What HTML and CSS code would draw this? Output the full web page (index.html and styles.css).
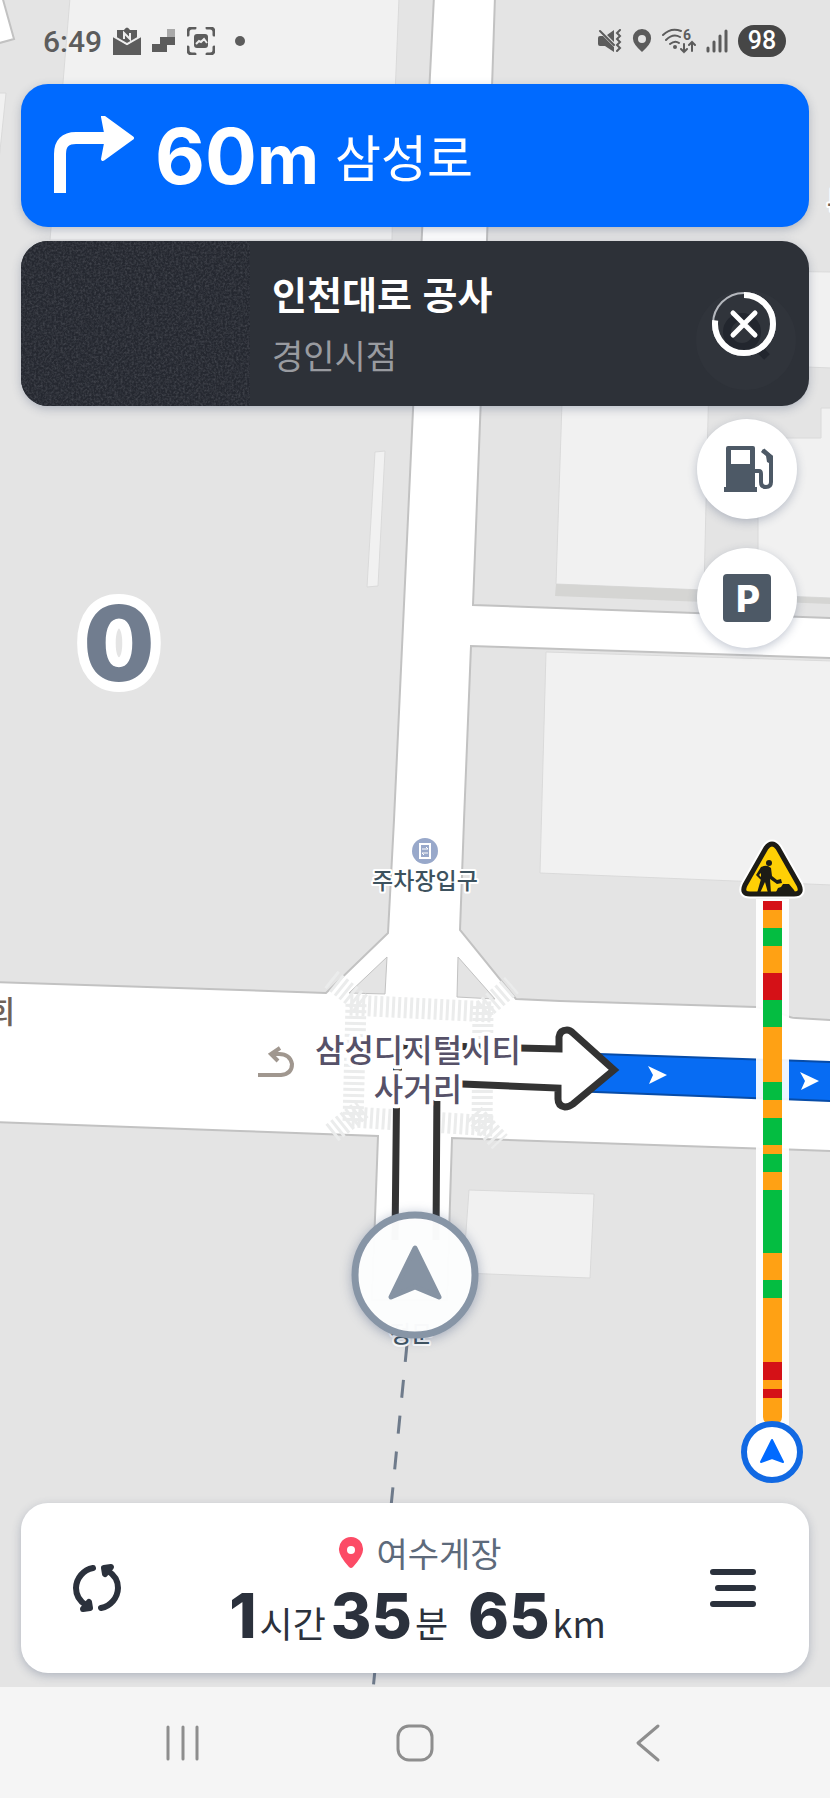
FILE: index.html
```html
<!DOCTYPE html>
<html lang="ko">

<head>
  <meta charset="utf-8">
  <title>길안내</title>
  <meta name="viewport" content="width=device-width, initial-scale=1.0">
  <link rel="stylesheet" href="styles.css">
</head>

<body>
  <div class="app">
    <div class="stage">
      <!-- map -->
      <svg class="map" viewBox="0 0 830 1687" preserveAspectRatio="xMidYMid slice" aria-hidden="true">
        <rect width="830" height="1687" class="land"/>

        <g class="building">
          <path d="M70 -2L399 -2L394 120L392 240L50 240Z"/>
          <path d="M-2 93H6L-2 170Z"/>
          <path d="M375 452L385 451L378 586L367 587Z"/>
          <path d="M679 270L832 272V368L676 362Z"/>
          <path d="M563 372L709 376L704 590L556 584Z"/>
          <path d="M758 438H821V408H832V598L758 595Z"/>
          <path d="M546 652L832 661V885L540 873Z"/>
          <path d="M469 1190L594 1194L590 1278L463 1273Z"/>
        </g>
        <path class="wall" d="M556 584L704 590V602L555 596Z"/>
        <path class="wall" d="M758 595L832 598V604L758 601Z"/>

        <g class="road">
          <path d="M-4 -4H2L14 39L-4 44Z"/>
          <path d="M434 -4H495L487 240L473 605L832 618V658L471 646L464 820L460 930L516 999L560 1001L756 1007L786 1015Q790 1018 796 1018L832 1020V1151L452 1138L447 1300H372L378 1136L240 1131L-4 1122V982L240 990L326 993L388 933L394 820L413 410Z"/>
        </g>
        <path class="island" d="M387 957L385 994L349 993Z"/>
        <path class="island" d="M458 957L457 997L495 999Z"/>

        <g class="crosswalk">
          <path d="M350 1005L492 1012"/>
          <path d="M356 1004L353 1122"/>
          <path d="M483 1006L482 1132"/>
          <path d="M352 1117L494 1126"/>
          <path d="M331 979L362 1004"/>
          <path d="M483 1010L512 985"/>
          <path d="M332 1133L362 1109"/>
          <path d="M474 1114L500 1142"/>
        </g>

        <path class="u-turn" d="M258 1075H281Q292 1074 292 1064Q290 1054 279 1054H272M280 1048L271 1054L278 1061"/>

        <!-- planned route -->
        <path class="route" d="M570 1053L832 1062V1101L570 1091Z"/>
        <path class="route-edge" d="M570 1053L832 1062M570 1091L832 1101"/>
        <path class="route-tip" d="M648 1066L667 1075L649 1084L653 1075Z"/>
        <path class="route-tip" d="M800 1072L819 1081L801 1090L805 1081Z"/>

        <path class="turn-line" d="M395 1240L397 1056Q397 1045 408 1045L559 1049V1037Q560 1030 567 1030Q570 1030 573 1033L614 1070L573 1104Q569 1107 565 1107Q558 1106 558 1099V1088L437 1083L436 1240"/>
        <path class="turn-tick" d="M393 1069H402"/>

        <path class="trail" d="M407 1344L373 1690"/>

        <!-- places -->
        <circle cx="425" cy="851" r="13" class="poi"/>
        <path class="poi-mark" d="M420 844H430V858H420Z"/>
        <path class="poi-arrows" d="M422 849H428L426 847M428 853H422L424 855"/>
        <g class="label">
          <text x="425" y="889" class="label-place">주차장입구</text>
          <text x="411" y="1342" class="label-place">정문</text>
          <text x="418" y="1062" class="label-cross">삼성디지털시티</text>
          <text x="418" y="1101" class="label-cross">사거리</text>
          <text x="1" y="1023" class="label-edge">회</text>
          <text x="841" y="214" class="label-edge">특</text>
        </g>

        <!-- current position -->
        <circle cx="415" cy="1275" r="60" class="me"/>
        <path class="me-arrow" d="M415 1248L439 1297L415 1287L391 1297Z"/>
      </svg>

      <header class="status">
        <span class="clock">6:49</span>
        <svg width="28" height="28" viewBox="0 0 28 28" class="ink">
          <path d="M4 3H11Q14 -2 17 3H24V11L14 17L4 11Z"/>
          <path d="M0 9L14 18L28 9V28H0Z"/>
          <path class="knock" d="M0 9L14 17L28 9"/>
          <path class="knock" d="M11 12V6L17 12V6"/>
        </svg>
        <svg width="24" height="24" viewBox="0 0 24 24" class="ink">
          <path d="M0 15H8V8H15V1H23V16H15V23H0Z"/>
          <path d="M15 0H23V8H15Z" class="pale"/>
        </svg>
        <svg width="28" height="28" viewBox="0 0 28 28" class="ink">
          <path class="line" d="M1 8V5Q1 1 5 1H8M20 1H23Q27 1 27 5V8M27 20V23Q27 27 23 27H20M8 27H5Q1 27 1 23V20"/>
          <rect x="7" y="7" width="14" height="14" rx="3"/>
          <path class="knock" d="M9 17L12 14L14 15L17 12L20 16"/>
        </svg>
        <svg width="24" height="24" viewBox="0 0 24 24" class="ink"><circle cx="14" cy="12" r="5"/></svg>

        <div class="status-right">
          <svg width="24" height="24" viewBox="0 0 24 24" class="ink">
            <path d="M0 9Q0 7 2 7H5L16 18V23L7 17H2Q0 17 0 15ZM9 6L16 1V13Z"/>
            <path class="line thin" d="M2 2L16 16M22 1L19 4L22 7L19 10L22 13L19 16L22 19L19 22"/>
          </svg>
          <svg width="20" height="24" viewBox="0 0 20 24" class="ink">
            <path fill-rule="evenodd" d="M10 0A9 9 0 0 1 19 10Q19 15 10 23Q1 15 1 10A9 9 0 0 1 10 0ZM10 6A4 4 0 1 0 10 14A4 4 0 1 0 10 6Z"/>
          </svg>
          <svg width="34" height="26" viewBox="0 0 34 26" class="ink">
            <path class="line thin" d="M1 7Q9 -1 19 3M4 12Q11 5 18 9M8 16Q13 12 17 15M22 16V24M19 21L22 24L25 21M30 23V14M27 17L30 14L33 17"/>
            <circle cx="13" cy="19" r="2"/>
            <text x="21" y="12" class="wifi-num">6</text>
          </svg>
          <svg width="22" height="24" viewBox="0 0 22 24" class="ink">
            <path class="line" d="M2 19V22M8 13V22M14 7V22M20 2V22"/>
          </svg>
          <span class="battery">98</span>
        </div>
      </header>

      <section class="card turn">
        <svg width="82" height="80" viewBox="0 2 82 80" aria-hidden="true">
          <path class="turn-stem" d="M7 79V40Q7 24 23 24H56"/>
          <path class="turn-head" d="M50 3L79 24L50 45L54 24Z"/>
        </svg>
        <strong class="distance">60<span class="metre">m</span></strong>
        <span class="street">삼성로</span>
      </section>

      <section class="card notice">
        <svg class="thumb" aria-hidden="true">
          <filter id="grain">
            <feTurbulence type="fractalNoise" baseFrequency="0.45" numOctaves="3" seed="4"/>
            <feColorMatrix values="0 0 0 0 .22  0 0 0 0 .23  0 0 0 0 .26  2 0 0 0 -.7"/>
          </filter>
          <rect width="100%" height="100%" filter="url(#grain)" opacity=".3"/>
        </svg>
        <div class="notice-text">
          <h2>인천대로 공사</h2>
          <p>경인시점</p>
        </div>
        <button class="dismiss" type="button" aria-label="닫기">
          <svg width="66" height="66" viewBox="0 0 66 66">
            <circle cx="35" cy="49" r="50" class="under"/>
            <circle cx="31" cy="41" r="15" class="under-lens"/>
            <path class="under-lens" d="M46 56L56 66"/>
            <circle cx="33" cy="33" r="31" class="ring"/>
            <circle cx="33" cy="33" r="29" class="ring-left" pathLength="100" transform="rotate(-90 33 33)"/>
            <path class="cross" d="M22 22L44 44M44 22L22 44"/>
          </svg>
        </button>
      </section>

      <main class="over-map">
        <svg class="speed" width="100" height="110" viewBox="0 0 100 110"><text x="50" y="93">0</text></svg>

        <div class="side">
          <button class="round" type="button" aria-label="주유소">
            <svg width="50" height="48" viewBox="-2 0 50 48">
              <path fill-rule="evenodd" d="M4 1H29Q31 1 31 3V42H33V47H0V42H2V3Q2 1 4 1ZM7 5V19H26V5Z"/>
              <path class="hose" d="M30 26H35Q37 26 37 29V37Q37 42 42 42Q47 42 47 37V12L39 5"/>
              <path d="M39 4L49 11V20L43 17L42 11L37 7Z"/>
            </svg>
          </button>
          <button class="round" type="button" aria-label="주차장">
            <svg width="48" height="48" viewBox="0 0 48 48">
              <rect width="48" height="48" rx="4"/>
              <text x="25" y="38" class="parking">P</text>
            </svg>
          </button>

          <!-- traffic on the way ahead -->
          <div class="traffic">
            <svg class="sign" width="66" height="60" viewBox="0 0 66 60">
              <path class="sign-halo" d="M27 9Q33 1 39 9L60 46Q64 55 55 55H11Q2 55 6 46Z"/>
              <path class="sign-face" d="M27 9Q33 1 39 9L60 46Q64 55 55 55H11Q2 55 6 46Z"/>
              <circle cx="30" cy="24" r="3"/>
              <path d="M22 28Q28 25 32 29L33 37L38 41L42 40L43 44L38 45L31 40L32 54H29L26 43L21 54H18L22 40L22 34L20 36L23 39L22 41L17 36Z"/>
              <path d="M36 55L39 49L42 48L44 45L50 45L55 51L57 55Z"/>
            </svg>
            <div class="bar">
              <i class="jam" style="flex-grow:1"></i>
              <i class="slow" style="flex-grow:2"></i>
              <i class="free" style="flex-grow:2"></i>
              <i class="slow" style="flex-grow:3"></i>
              <i class="jam" style="flex-grow:3"></i>
              <i class="free" style="flex-grow:3"></i>
              <i class="slow" style="flex-grow:6"></i>
              <i class="free" style="flex-grow:2"></i>
              <i class="slow" style="flex-grow:2"></i>
              <i class="free" style="flex-grow:3"></i>
              <i class="slow" style="flex-grow:1"></i>
              <i class="free" style="flex-grow:2"></i>
              <i class="slow" style="flex-grow:2"></i>
              <i class="free" style="flex-grow:7"></i>
              <i class="slow" style="flex-grow:3"></i>
              <i class="free" style="flex-grow:2"></i>
              <i class="slow" style="flex-grow:7"></i>
              <i class="jam" style="flex-grow:2"></i>
              <i class="slow" style="flex-grow:1"></i>
              <i class="jam" style="flex-grow:1"></i>
              <i class="slow" style="flex-grow:3"></i>
            </div>
            <svg class="car" width="62" height="62" viewBox="0 0 62 62">
              <circle cx="31" cy="31" r="28"/>
              <path d="M31 19L42 41L31 37L20 41Z"/>
            </svg>
          </div>
        </div>
      </main>

      <section class="card trip">
        <button type="button" aria-label="경로 새로고침">
          <svg width="52" height="52" viewBox="0 0 52 52">
            <g id="half">
              <path d="M22 6A21 21 0 0 0 5 26Q5 37 15 43"/>
              <path class="head" d="M18 40L19 46L12 47Z"/>
            </g>
            <use href="#half" transform="rotate(180 26 26)"/>
          </svg>
        </button>
        <div class="trip-info">
          <p class="goal">
            <svg width="26" height="32" viewBox="0 0 26 32" aria-hidden="true">
              <path d="M13 0A12 12 0 0 1 25 13Q25 19 15 30Q13 32 11 30Q1 19 1 13A12 12 0 0 1 13 0Z"/>
              <circle cx="13" cy="13" r="4"/>
            </svg>
            여수게장
          </p>
          <p class="eta">
            <b>1</b><span>시간</span><b>35</b><span>분</span><b class="km">65</b><span>km</span>
          </p>
        </div>
        <button type="button" aria-label="메뉴">
          <svg width="52" height="52" viewBox="0 0 52 52">
            <path d="M6 10H46M11 26H46M6 42H46"/>
          </svg>
        </button>
      </section>
    </div>

    <nav class="keys">
      <button type="button" aria-label="최근 앱">
        <svg width="40" height="40" viewBox="0 0 40 40"><path d="M7 4V36M22 4V36M36 4V36"/></svg>
      </button>
      <button type="button" aria-label="홈">
        <svg width="40" height="40" viewBox="0 0 40 40"><rect x="3" y="3" width="34" height="34" rx="11"/></svg>
      </button>
      <button type="button" aria-label="뒤로">
        <svg width="40" height="40" viewBox="0 0 40 40"><path d="M29 3L9 20L29 37"/></svg>
      </button>
    </nav>
  </div>
</body>

</html>
```
FILE: styles.css
```css
:root {
  --blue: #006aff;
  --ink: #2b313c;
  --icon: #4d5966;
  --status: #5c5c5c;
  --jam: #d51117;
  --slow: #ffa114;
  --free: #04bd41;
  --shadow: 0 3px 10px rgba(60, 75, 110, 0.3);
}

* {
  box-sizing: border-box;
}

body {
  margin: 0;
  font-family: "Noto Sans CJK KR", sans-serif;
  color: var(--ink);
}

h2,
p {
  margin: 0;
}

button {
  border: 0;
  padding: 0;
  background: none;
  cursor: pointer;
}

svg {
  display: block;
}

.app {
  min-height: 100vh;
  display: flex;
  flex-direction: column;
}

.stage {
  flex: 1;
  position: relative;
  display: flex;
  flex-direction: column;
  padding: 0 21px 14px;
  overflow: hidden;
}

.stage > * {
  position: relative;
}

/* map */

.stage > .map {
  position: absolute;
  inset: 0;
  width: 100%;
  height: 100%;
}

.land {
  fill: #e4e4e4;
}

.building {
  fill: #f1f1f1;
  stroke: #dadada;
  stroke-width: 1;
}

.wall {
  fill: #d5d5d3;
}

.road {
  fill: #fff;
  stroke: #c2c2c2;
  stroke-width: 2;
}

.island {
  fill: #e4e4e4;
  stroke: #c2c2c2;
  stroke-width: 1;
}

.crosswalk {
  fill: none;
  stroke: #ebecec;
  stroke-width: 21;
  stroke-dasharray: 3 3;
}

.u-turn {
  fill: none;
  stroke: #a0978f;
  stroke-width: 4;
}

.route {
  fill: #076cf3;
}

.route-edge {
  fill: none;
  stroke: #074ca8;
  stroke-width: 2;
}

.route-tip {
  fill: #fff;
}

.turn-line {
  fill: #fff;
  stroke: #333;
  stroke-width: 7;
}

.turn-tick {
  stroke: #333;
  stroke-width: 3;
}

.trail {
  stroke: #6f7b8b;
  stroke-width: 3;
  stroke-dasharray: 18 18;
}

.poi {
  fill: #98a8ca;
}

.poi-mark {
  fill: none;
  stroke: #fff;
  stroke-width: 2;
}

.poi-arrows {
  fill: none;
  stroke: #fff;
  stroke-width: 1;
}

.label {
  text-anchor: middle;
  font-weight: 500;
  paint-order: stroke;
  stroke: #fff;
  stroke-width: 4;
  stroke-linejoin: round;
}

.label-place {
  font-size: 23px;
  fill: #3d525e;
}

.label-cross {
  font-size: 32px;
  fill: #565168;
  stroke-width: 8;
}

.label-edge {
  font-size: 31px;
  fill: #6f6258;
}

.me {
  fill: rgba(255, 255, 255, 0.97);
  stroke: #8795a6;
  stroke-width: 7;
  filter: drop-shadow(0 2px 6px rgba(60, 80, 120, 0.4));
}

.me-arrow {
  fill: #8693a3;
  stroke: #8693a3;
  stroke-width: 5;
  stroke-linejoin: round;
}

/* status bar */

.status {
  height: 84px;
  padding: 0 23px 2px 22px;
  display: flex;
  align-items: center;
  gap: 11px;
}

.clock {
  font: 500 30px Roboto, sans-serif;
  color: var(--status);
}

.status-right {
  margin-left: auto;
  display: flex;
  align-items: center;
  gap: 10px;
}

.ink {
  fill: var(--status);
}

.line {
  fill: none;
  stroke: var(--status);
  stroke-width: 3;
  stroke-linecap: round;
}

.thin {
  stroke-width: 2;
}

.knock {
  fill: none;
  stroke: #eee;
  stroke-width: 2;
}

.pale {
  fill: #a9a9a9;
}

.wifi-num {
  font: 700 14px Roboto, sans-serif;
}

.battery {
  width: 48px;
  border-radius: 16px;
  background: #464646;
  color: #fff;
  font: 500 25px/32px Roboto, sans-serif;
  text-align: center;
}

/* cards */

.card {
  border-radius: 27px;
  box-shadow: var(--shadow);
  display: flex;
  align-items: center;
}

.turn {
  height: 143px;
  margin-bottom: 14px;
  padding: 0 32px;
  background: var(--blue);
  color: #fff;
}

.turn-stem {
  fill: none;
  stroke: #fff;
  stroke-width: 12;
}

.turn-head {
  fill: #fff;
  stroke: #fff;
  stroke-width: 4;
  stroke-linejoin: round;
}

.distance {
  margin: 0 16px 0 20px;
  font: 700 77px Inter, sans-serif;
}

.metre {
  font-size: 68px;
}

.street {
  font-size: 50px;
  line-height: 60px;
  padding-bottom: 2px;
}

.notice {
  height: 165px;
  padding-right: 32px;
  background: #2d3138;
  color: #fff;
  overflow: hidden;
}

.thumb {
  width: 229px;
  height: 100%;
  background: #252830;
}

.notice-text {
  flex: 1;
  padding-left: 22px;
}

.notice h2 {
  font-size: 38px;
  line-height: 62px;
  font-weight: 700;
}

.notice p {
  font-size: 34px;
  line-height: 62px;
  color: #999ba0;
}

.dismiss svg {
  overflow: visible;
}

.under {
  fill: #30343b;
}

.under-lens {
  fill: none;
  stroke: #22262e;
  stroke-width: 8;
}

.ring {
  fill: none;
  stroke: #b4b7bd;
  stroke-width: 2;
}

.ring-left {
  fill: none;
  stroke: #fff;
  stroke-width: 6;
  stroke-dasharray: 77 23;
}

.cross {
  stroke: #fff;
  stroke-width: 5;
  stroke-linecap: round;
}

/* controls lying over the map */

.over-map {
  flex: 1;
  display: flex;
  justify-content: space-between;
}

.speed {
  margin: 182px 0 0 48px;
  overflow: visible;
}

.speed text {
  font: 800 104px Inter, sans-serif;
  text-anchor: middle;
  fill: #717d8f;
  stroke: #fff;
  stroke-width: 20;
  stroke-linejoin: round;
  paint-order: stroke;
}

.side {
  display: flex;
  flex-direction: column;
  align-items: flex-end;
  gap: 29px;
  padding: 13px 0 20px;
}

.round {
  width: 100px;
  height: 100px;
  margin-right: 12px;
  border-radius: 50%;
  background: #fff;
  box-shadow: var(--shadow);
  display: grid;
  place-items: center;
  fill: var(--icon);
}

.round svg {
  overflow: visible;
}

.hose {
  fill: none;
  stroke: var(--icon);
  stroke-width: 4;
}

.parking {
  font: 800 37px Inter, sans-serif;
  text-anchor: middle;
  fill: #fff;
}

.traffic {
  flex: 1;
  margin: 162px 4px 0 0;
  display: flex;
  flex-direction: column;
  align-items: center;
}

.sign,
.car {
  position: relative;
  z-index: 1;
}

.sign {
  fill: #1d1c16;
}

.sign-halo {
  fill: #fff;
  stroke: #fff;
  stroke-width: 9;
  stroke-linejoin: round;
}

.sign-face {
  fill: #ffd005;
  stroke: #1d1c16;
  stroke-width: 5;
  stroke-linejoin: round;
}

.bar {
  flex: 1;
  width: 33px;
  margin-bottom: -4px;
  padding: 2px 7px 0;
  background: rgba(255, 255, 255, 0.93);
  display: flex;
  flex-direction: column;
}

.bar i:last-child {
  border-radius: 0 0 8px 8px;
}

.jam {
  background: var(--jam);
}

.slow {
  background: var(--slow);
}

.free {
  background: var(--free);
}

.car {
  fill: #fff;
  stroke: #1169e3;
  stroke-width: 6;
}

.car path {
  fill: var(--blue);
  stroke: var(--blue);
  stroke-width: 2;
  stroke-linejoin: round;
}

/* trip summary */

.trip {
  height: 170px;
  background: #fff;
  padding: 0 50px;
  justify-content: space-between;
}

.trip button {
  fill: none;
  stroke: var(--ink);
  stroke-width: 6;
  stroke-linecap: round;
  stroke-linejoin: round;
}

.head {
  fill: var(--ink);
}

.goal {
  display: flex;
  align-items: center;
  justify-content: center;
  gap: 12px;
  padding-left: 10px;
  font-size: 34px;
  line-height: 54px;
  color: #5d6a7b;
}

.goal path {
  fill: #fc4b66;
}

.goal circle {
  fill: #fff;
}

.eta {
  display: flex;
  align-items: baseline;
  height: 70px;
  font-size: 36px;
  line-height: 72px;
}

.eta b {
  font: 800 62px/72px Inter, sans-serif;
  margin: 0 3px 0 5px;
}

.eta .km {
  margin-left: 20px;
}

/* system keys */

.keys {
  height: 111px;
  padding: 0 17%;
  background: #f5f5f5;
  display: flex;
  align-items: center;
  justify-content: space-between;
}

.keys button {
  width: 80px;
  height: 80px;
  display: grid;
  place-items: center;
  fill: none;
  stroke: #8e8e8e;
  stroke-width: 3;
  stroke-linecap: round;
  stroke-linejoin: round;
}
```
